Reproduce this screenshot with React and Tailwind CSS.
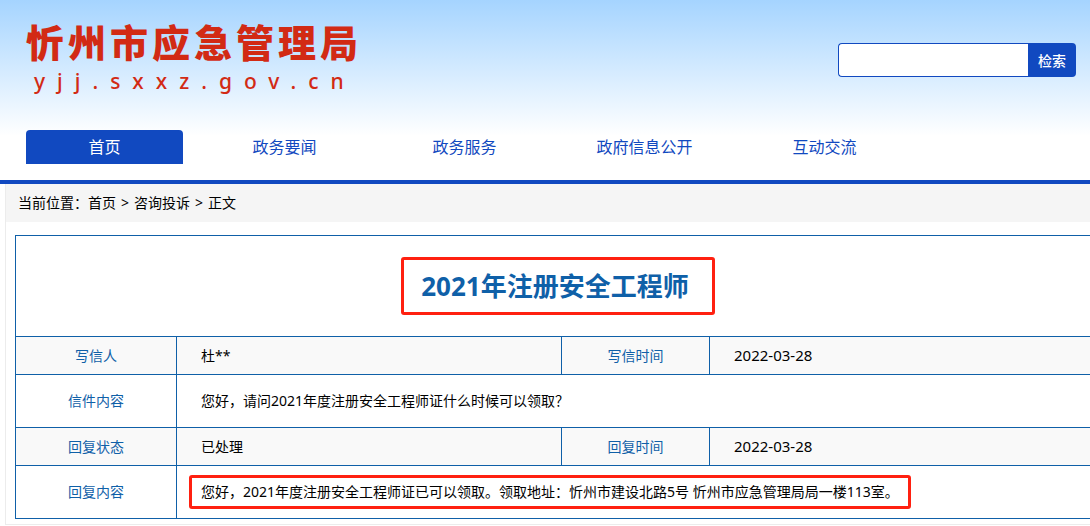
import React, { useState } from "react";

const navItems = ["首页", "政务要闻", "政务服务", "政府信息公开", "互动交流"];

const labelClass =
  "border border-[#0f60a8] text-center font-normal text-[#0f60a8]";
const valueClass = "border border-[#0f60a8] px-6 text-left";
const dateClass = "border border-[#0f60a8] px-6 text-left text-[15px]";

const Header = () => {
  const [keyword, setKeyword] = useState("");

  return (
    <header className="border-b-4 border-[#1149c0] bg-linear-to-b from-[#a5d4ff] to-white to-[136px] pb-4">
      <div className="flex items-start justify-between pt-4 pr-[14px] pl-[26px]">
        <a href="#" className="block text-[#d22a14]">
          <span className="block text-[38px] leading-[52px] font-black tracking-[4px]">
            忻州市应急管理局
          </span>
          <span className="block pl-2 text-[21px] leading-[26px] font-medium tracking-[12px]">
            yjj.sxxz.gov.cn
          </span>
        </a>
        <form
          className="mt-[27px] flex h-[34px]"
          onSubmit={(e) => e.preventDefault()}
        >
          <input
            type="text"
            aria-label="检索"
            value={keyword}
            onChange={(e) => setKeyword(e.target.value)}
            className="w-[190px] rounded-l border border-r-0 border-[#1149c0] bg-white px-2 text-sm focus:outline-none"
          />
          <button
            type="submit"
            className="w-12 rounded-r bg-[#1149c0] pt-px text-sm font-medium text-white"
          >
            检索
          </button>
        </form>
      </div>
      <nav className="mt-9 flex gap-[23px] px-[26px]">
        {navItems.map((item, index) => (
          <a
            key={item}
            href="#"
            className={
              index === 0
                ? "w-[157px] rounded-t bg-[#1149c0] text-center text-base leading-[34px] text-white"
                : "w-[157px] text-center text-base leading-[34px] text-[#1149c0]"
            }
          >
            {item}
          </a>
        ))}
      </nav>
    </header>
  );
};

const Breadcrumb = () => (
  <div className="flex h-[38px] items-center bg-[#f5f5f5] pl-3">
    <span>当前位置：</span>
    <a href="#">首页</a>
    <span className="px-[5px]">&gt;</span>
    <a href="#">咨询投诉</a>
    <span className="px-[5px]">&gt;</span>
    <span>正文</span>
  </div>
);

const LetterTable = () => (
  <table className="w-full table-fixed border-collapse border border-[#0f60a8]">
    <colgroup>
      <col className="w-[161px]" />
      <col />
      <col className="w-[148px]" />
      <col />
    </colgroup>
    <tbody>
      <tr className="h-[101px]">
        <td colSpan={4} className="border border-[#0f60a8] text-center">
          <h1 className="relative inline-block text-[26px] leading-9 font-bold text-[#0f60a8]">
            2021年注册安全工程师
            <span className="absolute -inset-y-[11px] -right-[26px] -left-5 rounded-[3px] border-3 border-[#ff2010]" />
          </h1>
        </td>
      </tr>
      <tr className="h-[38px] bg-[#f9f9f9]">
        <th scope="row" className={labelClass}>写信人</th>
        <td className={valueClass}>杜**</td>
        <th scope="row" className={labelClass}>写信时间</th>
        <td className={dateClass}>2022-03-28</td>
      </tr>
      <tr className="h-[53px]">
        <th scope="row" className={labelClass}>信件内容</th>
        <td colSpan={3} className={valueClass}>
          您好，请问2021年度注册安全工程师证什么时候可以领取？
        </td>
      </tr>
      <tr className="h-[38px] bg-[#f9f9f9]">
        <th scope="row" className={labelClass}>回复状态</th>
        <td className={valueClass}>已处理</td>
        <th scope="row" className={labelClass}>回复时间</th>
        <td className={dateClass}>2022-03-28</td>
      </tr>
      <tr className="h-[53px]">
        <th scope="row" className={labelClass}>回复内容</th>
        <td colSpan={3} className={valueClass}>
          <p className="relative inline-block">
            您好，2021年度注册安全工程师证已可以领取。领取地址：忻州市建设北路5号 忻州市应急管理局局一楼113室。
            <span className="absolute -inset-x-3 -inset-y-[7px] rounded-[3px] border-3 border-[#ff2010]" />
          </p>
        </td>
      </tr>
    </tbody>
  </table>
);

const App = () => {
  return (
    <div className="overflow-x-clip bg-white font-['Noto_Sans','Noto_Sans_CJK_SC',sans-serif] text-sm text-black">
      <Header />
      {/* content column is a little wider than the viewport */}
      <main className="-mr-[15px] ml-[5px] border border-t-0 border-[#ececec]">
        <Breadcrumb />
        <div className="px-[9px] pt-[13px] pb-[5px]">
          <LetterTable />
        </div>
      </main>
    </div>
  );
};

export default App;
